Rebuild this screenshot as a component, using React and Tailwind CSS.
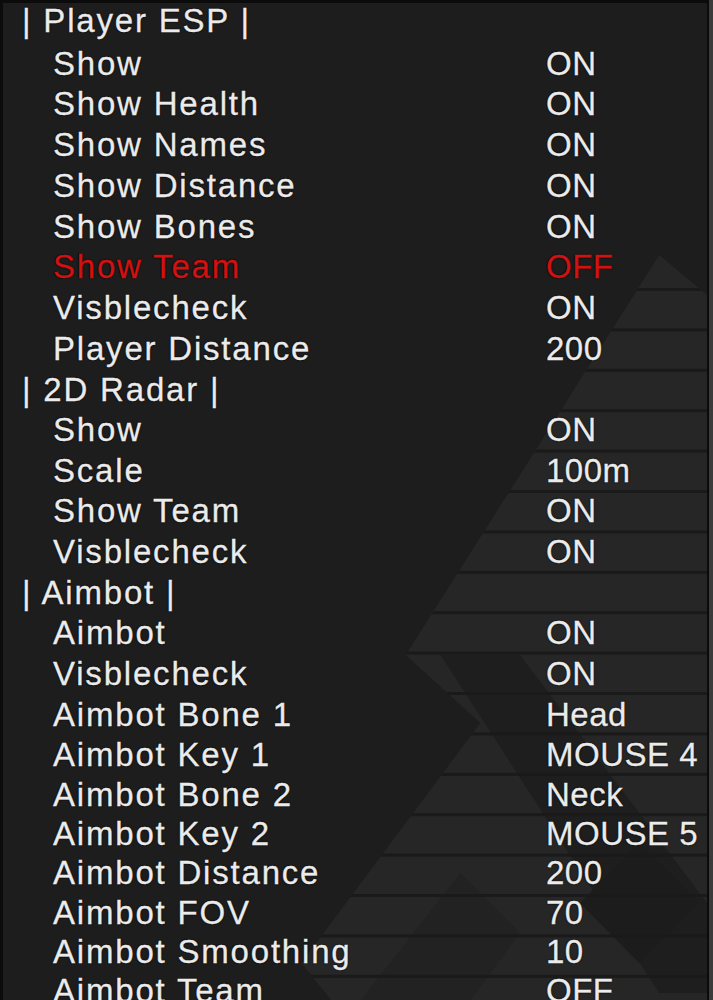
import React from 'react';

const menu = [
  {
    title: 'Player ESP',
    items: [
      ['Show', 'ON'],
      ['Show Health', 'ON'],
      ['Show Names', 'ON'],
      ['Show Distance', 'ON'],
      ['Show Bones', 'ON'],
      ['Show Team', 'OFF', true],
      ['Visblecheck', 'ON'],
      ['Player Distance', '200'],
    ],
  },
  {
    title: '2D Radar',
    items: [
      ['Show', 'ON'],
      ['Scale', '100m'],
      ['Show Team', 'ON'],
      ['Visblecheck', 'ON'],
    ],
  },
  {
    title: 'Aimbot',
    items: [
      ['Aimbot', 'ON'],
      ['Visblecheck', 'ON'],
      ['Aimbot Bone 1', 'Head'],
      ['Aimbot Key 1', 'MOUSE 4', false, true],
      ['Aimbot Bone 2', 'Neck', false, true],
      ['Aimbot Key 2', 'MOUSE 5', false, true],
      ['Aimbot Distance', '200', false, true],
      ['Aimbot FOV', '70', false, true],
      ['Aimbot Smoothing', '10', false, true],
      ['Aimbot Team', 'OFF', false, true],
    ],
  },
];

// faint striped arrow logo behind the menu
const Backdrop = () => {
  const gaps = [];
  for (let y = 285; y < 1000; y += 40.4) gaps.push(y);
  return (
    <svg className="absolute inset-0 h-full w-full" viewBox="0 0 708 997" preserveAspectRatio="none">
      <defs>
        <clipPath id="logo">
          <polygon points="660,252 708,292 708,997 330,997 300,960 480,720 405,652" />
        </clipPath>
      </defs>
      <g clipPath="url(#logo)">
        <rect x="0" y="0" width="708" height="997" fill="#262626" />
        {/* dark cross strokes inside the logo */}
        <polygon points="440,652 520,652 708,900 708,990 660,990" fill="#1e1e1e" />
        <polygon points="640,840 700,900 640,960 580,900" fill="#1c1c1c" />
        <polygon points="360,997 460,870 520,930 470,997" fill="#222222" />
        {gaps.map((y) => (
          <rect key={y} x="0" y={y} width="708" height="3" fill="#1a1a1a" />
        ))}
      </g>
    </svg>
  );
};

const Row = ({ label, value, off, header, compact }) => (
  <div
    className={`grid grid-cols-[543px_1fr] items-center whitespace-nowrap ${
      header
        ? 'h-[40.3px] leading-[40.3px]'
        : compact
          ? 'h-[39.3px] leading-[39.3px]'
          : 'h-[40.75px] leading-[40.75px]'
    } ${off ? 'text-[#d01212]' : 'text-[#ebebeb]'}`}
  >
    <span className={header ? 'pl-[19px]' : 'pl-[50px]'}>{label}</span>
    <span className="tracking-[0.5px]">{value}</span>
  </div>
);

export default function App() {
  return (
    <div className="h-[1000px] w-[713px] overflow-hidden bg-[#3b3b3b]">
      <div className="relative h-full w-[709px] overflow-hidden border-t-[3px] border-r-[2px] border-l-[3px] border-[#0b0b0b] bg-[#1d1d1d]">
        <Backdrop />
        <div className="relative font-['Liberation_Sans',Arial,sans-serif] text-[33px] tracking-[1.8px] [-webkit-text-stroke:0.3px_currentColor] [text-shadow:0_0_2px_#000,0_0_1px_#000]">
          {menu.map((group, gi) => (
            <div key={group.title}>
              <div className={gi === 0 ? '-mt-[2.2px] mb-[2.4px]' : ''}>
                <Row header label={`| ${group.title} |`} />
              </div>
              {group.items.map(([label, value, off, compact]) => (
                <Row key={label} label={label} value={value} off={off} compact={compact} />
              ))}
            </div>
          ))}
        </div>
      </div>
    </div>
  );
}
